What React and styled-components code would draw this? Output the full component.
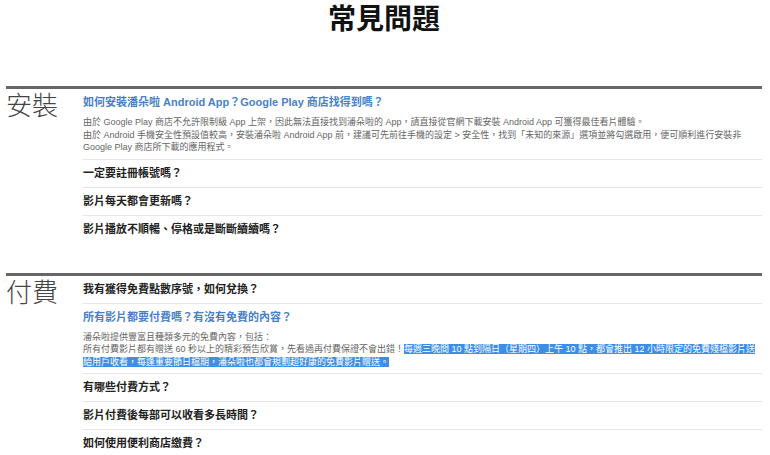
import React from 'react';
import styled, { createGlobalStyle } from 'styled-components';

const Global = createGlobalStyle`
  body { margin: 0; background: #fff; font-family: "Liberation Sans", "Noto Sans CJK TC", sans-serif; }
`;

const Page = styled.div`
  padding: 0 8px 0 6px;
`;

const Title = styled.h1`
  margin: 0;
  padding-top: 4px;
  height: 82px;
  text-align: center;
  font-size: 28px;
  font-weight: bold;
  color: #111;
  line-height: 32px;
`;

const Section = styled.section`
  display: grid;
  grid-template-columns: 77px 1fr;
  border-top: 3px solid #666;
  margin-bottom: ${p => p.gap}px;
`;

const Category = styled.div`
  font-size: 26px;
  font-weight: 300;
  color: #444;
  line-height: 30px;
  padding-top: 2px;
`;

const List = styled.div`
  display: flex;
  flex-direction: column;
`;

const Item = styled.div`
  padding: 5px 0 5px;
  border-bottom: ${p => (p.last ? 'none' : '1px solid #e6e6e6')};
`;

const Question = styled.div`
  font-size: 11px;
  font-weight: bold;
  line-height: 17px;
  color: ${p => (p.open ? '#4a7fc9' : '#222')};
`;

const Answer = styled.div`
  font-size: 9px;
  line-height: 12.5px;
  color: #666;
  margin-top: 5px;
`;

const Mark = styled.span`
  background: #3d8ee8;
  color: #fff;
`;

export default function App() {
  return (
    <Page>
      <Global />
      <Title>常見問題</Title>
      <Section gap={30}>
        <Category>安裝</Category>
        <List>
          <Item>
            <Question open>如何安裝潘朵啦 Android App？Google Play 商店找得到嗎？</Question>
            <Answer>
              由於 Google Play 商店不允許限制級 App 上架，因此無法直接找到潘朵啦的 App，請直接從官網下載安裝 Android App 可獲得最佳看片體驗。<br />
              由於 Android 手機安全性預設值較高，安裝潘朵啦 Android App 前，建議可先前往手機的設定 &gt; 安全性，找到「未知的來源」選項並將勾選啟用，便可順利進行安裝非 Google Play 商店所下載的應用程式。
            </Answer>
          </Item>
          <Item><Question>一定要註冊帳號嗎？</Question></Item>
          <Item><Question>影片每天都會更新嗎？</Question></Item>
          <Item last><Question>影片播放不順暢、停格或是斷斷續續嗎？</Question></Item>
        </List>
      </Section>
      <Section gap={0}>
        <Category>付費</Category>
        <List>
          <Item><Question>我有獲得免費點數序號，如何兌換？</Question></Item>
          <Item>
            <Question open>所有影片都要付費嗎？有沒有免費的內容？</Question>
            <Answer>
              潘朵啦提供豐富且種類多元的免費內容，包括：<br />
              所有付費影片都有贈送 60 秒以上的精彩預告欣賞，先看過再付費保證不會出錯！<Mark>每週三晚間 10 點到隔日（星期四）上午 10 點，都會推出 12 小時限定的免費殘檔影片送給用戶收看，每逢重要節日檔期，潘朵啦也都會規劃超好康的免費影片贈送。</Mark>
            </Answer>
          </Item>
          <Item><Question>有哪些付費方式？</Question></Item>
          <Item><Question>影片付費後每部可以收看多長時間？</Question></Item>
          <Item last><Question>如何使用便利商店繳費？</Question></Item>
        </List>
      </Section>
    </Page>
  );
}
